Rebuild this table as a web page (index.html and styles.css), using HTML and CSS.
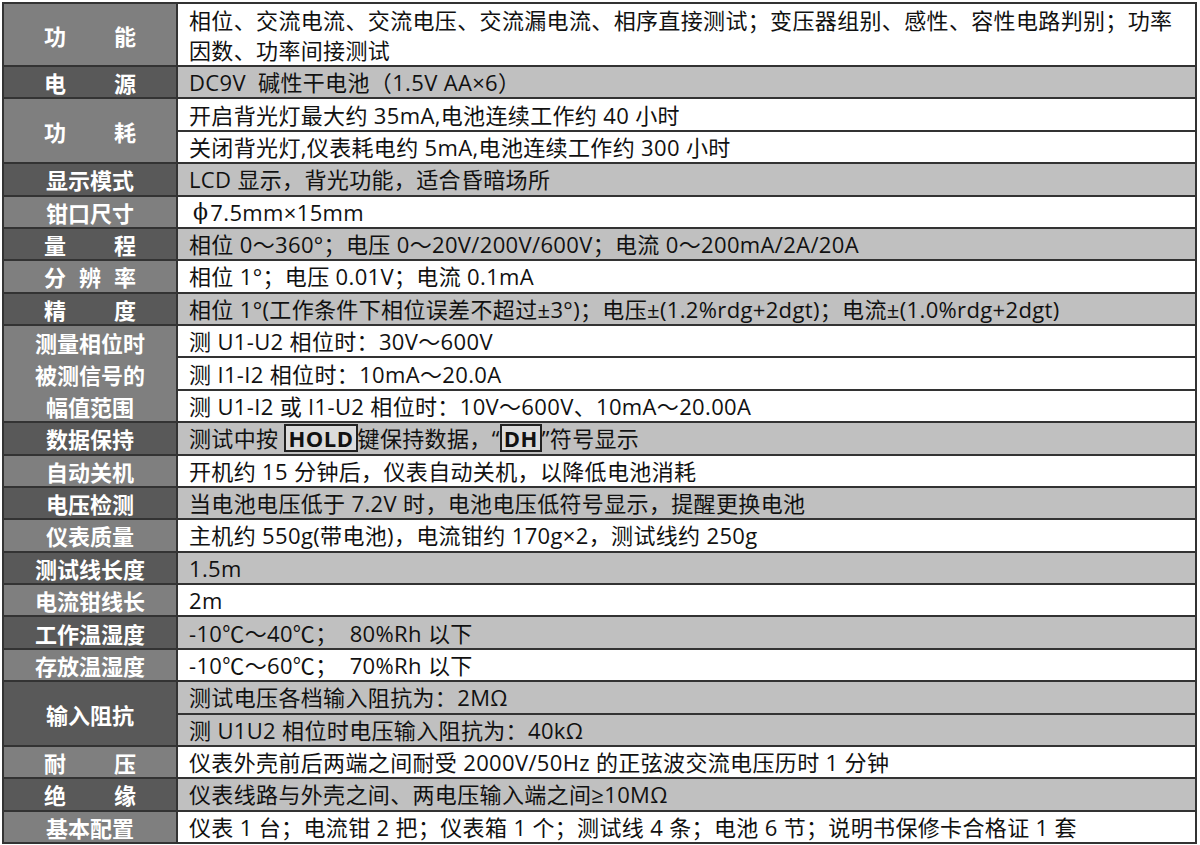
FILE: index.html
```html
<!DOCTYPE html>
<html lang="zh-CN">
<head>
<meta charset="utf-8">
<title>规格参数</title>
<link rel="stylesheet" href="styles.css">
</head>
<body>
<div class="spec">
  <div class="k a"><span class="sp">功能</span></div>
  <div class="v a">相位、交流电流、交流电压、交流漏电流、相序直接测试；变压器组别、感性、容性电路判别；功率因数、功率间接测试</div>

  <div class="k b"><span class="sp">电源</span></div>
  <div class="v b">DC9V&nbsp; 碱性干电池（1.5V AA×6）</div>

  <div class="k a r2"><span class="sp">功耗</span></div>
  <div class="v a">开启背光灯最大约 35mA,电池连续工作约 40 小时</div>
  <div class="v a">关闭背光灯,仪表耗电约 5mA,电池连续工作约 300 小时</div>

  <div class="k b">显示模式</div>
  <div class="v b">LCD 显示，背光功能，适合昏暗场所</div>

  <div class="k a">钳口尺寸</div>
  <div class="v a"><span class="phi">ϕ</span>7.5mm×15mm</div>

  <div class="k b"><span class="sp">量程</span></div>
  <div class="v b">相位 0～360°；电压 0～20V/200V/600V；电流 0～200mA/2A/20A</div>

  <div class="k a"><span class="sp">分辨率</span></div>
  <div class="v a">相位 1°；电压 0.01V；电流 0.1mA</div>

  <div class="k b"><span class="sp">精度</span></div>
  <div class="v b">相位 1°(工作条件下相位误差不超过±3°)；电压±(1.2%rdg+2dgt)；电流±(1.0%rdg+2dgt)</div>

  <div class="k a r3">测量相位时<br>被测信号的<br>幅值范围</div>
  <div class="v a">测 U1-U2 相位时：30V～600V</div>
  <div class="v a">测 I1-I2 相位时：10mA～20.0A</div>
  <div class="v a">测 U1-I2 或 I1-U2 相位时：10V～600V、10mA～20.00A</div>

  <div class="k b">数据保持</div>
  <div class="v b">测试中按&nbsp;<span class="key">HOLD</span>键保持数据，“<span class="key">DH</span>”符号显示</div>

  <div class="k a">自动关机</div>
  <div class="v a">开机约 15 分钟后，仪表自动关机，以降低电池消耗</div>

  <div class="k b">电压检测</div>
  <div class="v b">当电池电压低于 7.2V 时，电池电压低符号显示，提醒更换电池</div>

  <div class="k a">仪表质量</div>
  <div class="v a">主机约 550g(带电池)，电流钳约 170g×2，测试线约 250g</div>

  <div class="k b">测试线长度</div>
  <div class="v b">1.5m</div>

  <div class="k a">电流钳线长</div>
  <div class="v a">2m</div>

  <div class="k b">工作温湿度</div>
  <div class="v b">-10℃～40℃；&nbsp; 80%Rh 以下</div>

  <div class="k a">存放温湿度</div>
  <div class="v a">-10℃～60℃；&nbsp; 70%Rh 以下</div>

  <div class="k b r2">输入阻抗</div>
  <div class="v b">测试电压各档输入阻抗为：2MΩ</div>
  <div class="v b">测 U1U2 相位时电压输入阻抗为：40kΩ</div>

  <div class="k a"><span class="sp">耐压</span></div>
  <div class="v a">仪表外壳前后两端之间耐受 2000V/50Hz 的正弦波交流电压历时 1 分钟</div>

  <div class="k b"><span class="sp">绝缘</span></div>
  <div class="v b">仪表线路与外壳之间、两电压输入端之间≥10MΩ</div>

  <div class="k a">基本配置</div>
  <div class="v a">仪表 1 台；电流钳 2 把；仪表箱 1 个；测试线 4 条；电池 6 节；说明书保修卡合格证 1 套</div>
</div>
</body>
</html>
```

FILE: styles.css
```css
html, body {
  margin: 0;
  padding: 0;
  background: #ffffff;
}

.spec {
  margin: 2px 0 0 2px;
  width: 1195px;
  box-sizing: border-box;
  padding: 2px;
  background: #333333;
  display: grid;
  grid-template-columns: 172px 1fr;
  grid-template-rows: 61px;
  grid-auto-rows: 30.375px;
  gap: 2px;
  font-family: "Open Sans", "Noto Sans CJK SC", sans-serif;
}

.k {
  display: flex;
  align-items: center;
  justify-content: center;
  text-align: center;
  color: #ffffff;
  font-weight: bold;
  font-size: 22px;
  line-height: 32px;
  font-family: "Noto Sans CJK SC", sans-serif;
}

.k.a { background: #7f7f7f; }
.k.b { background: #595959; }

.r2 { grid-row: span 2; }
.r3 { grid-row: span 3; }

.sp {
  display: inline-block;
  width: 92px;
  text-align: justify;
  text-align-last: justify;
}

.v {
  display: flex;
  align-items: center;
  padding: 0 6px 0 11px;
  color: #111111;
  font-size: 22px;
  line-height: 30px;
  letter-spacing: 0.35px;
}

.v.a { background: #ffffff; }
.v.b { background: #c0c0c0; }

.phi {
  font-family: "DejaVu Serif", serif;
  padding-left: 4px;
  padding-right: 2px;
}

.key {
  display: inline-block;
  font-weight: bold;
  background: #dcdcdc;
  border: 2px solid #222222;
  padding: 0 2px;
  line-height: 24px;
  letter-spacing: 0.5px;
}
```
